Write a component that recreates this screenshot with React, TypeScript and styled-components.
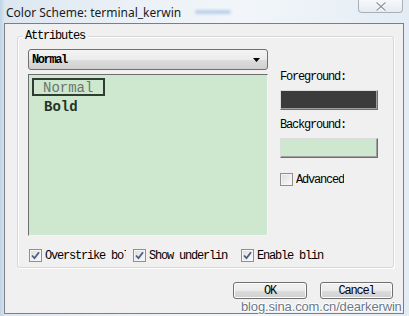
import React from "react";
import styled, { createGlobalStyle } from "styled-components";

const Global = createGlobalStyle`
  html, body { margin: 0; padding: 0; }
  body { width: 409px; height: 316px; overflow: hidden; }
`;

const dlgFont = `
  font-family: "Liberation Mono", "DejaVu Sans Mono", monospace;
  font-size: 12px;
  line-height: 12px;
  letter-spacing: -1.2px;
  color: #000;
`;

const Frame = styled.div`
  position: relative;
  width: 409px;
  height: 316px;
  box-sizing: border-box;
  padding: 0 5px 2px 4px;
  display: flex;
  flex-direction: column;
  background: linear-gradient(90deg, #bfd3e6 0px, #dce7f1 5px, #eaf0f6 30%, #f2f6fa 60%, #e3ecf4 100%);
`;

const TitleBar = styled.div`
  height: 23px;
  display: flex;
  align-items: flex-start;
`;

const Title = styled.span`
  font-family: "Noto Sans", "Open Sans", sans-serif;
  font-size: 12px;
  line-height: 17px;
  color: #1b1b1b;
  margin: 4px 0 0 2px;
  white-space: nowrap;
`;

const Smudge = styled.span`
  width: 36px;
  height: 4px;
  margin: 10px 0 0 14px;
  border-radius: 3px;
  background: #b9cfe8;
  filter: blur(1.5px);
`;

const CloseBtn = styled.div`
  margin-left: auto;
  margin-right: 1px;
  width: 45px;
  height: 13px;
  box-sizing: border-box;
  border: 1px solid #a9b0b8;
  border-top: none;
  border-radius: 0 0 4px 4px;
  background: linear-gradient(#f6f8fb, #e6ebf0);
  display: flex;
  align-items: center;
  justify-content: center;
`;

const Client = styled.div`
  flex: 1;
  border: 1px solid #7b7f84;
  background: #f0f0f0;
  display: flex;
  flex-direction: column;
`;

const Group = styled.div`
  position: relative;
  margin: 12px 0 0 12px;
  width: 377px;
  box-sizing: border-box;
  border: 1px solid #d5d8dc;
  border-radius: 3px;
  box-shadow: inset 1px 1px 0 #fff, 1px 1px 0 #fff;
  padding: 12px 10px 5px 10px;
`;

const Legend = styled.span`
  ${dlgFont}
  position: absolute;
  left: 5px;
  top: -7px;
  padding: 0 3px 0 2px;
  background: #f0f0f0;
`;

const Top = styled.div`
  display: grid;
  grid-template-columns: 240px 98px;
  column-gap: 12px;
`;

const LeftCol = styled.div`
  display: flex;
  flex-direction: column;
  gap: 4px;
`;

const Combo = styled.div`
  height: 21px;
  box-sizing: border-box;
  border: 1px solid #707070;
  border-radius: 3px;
  background: linear-gradient(#f3f3f3 0%, #ebebeb 50%, #dddddd 51%, #cfcfcf 100%);
  display: flex;
  align-items: center;
  padding: 0 7px 0 3px;
`;

const ComboText = styled.span`
  ${dlgFont}
  flex: 1;
  font-weight: bold;
  letter-spacing: -1.4px;
`;

const Sample = styled.div`
  height: 162px;
  box-sizing: border-box;
  background: #cde8cf;
  border: 1px solid;
  border-color: #6e6e6e #f4f4f4 #f4f4f4 #6e6e6e;
  padding: 3px 3px;
  display: flex;
  flex-direction: column;
  align-items: flex-start;
  gap: 1px;
`;

const SampleItem = styled.div<{ $bold?: boolean; $selected?: boolean }>`
  height: 18px;
  box-sizing: border-box;
  border: 2px solid ${(p) => (p.$selected ? "#2e3d30" : "transparent")};
  padding: 1px 10px 0 9px;
  font-family: "Liberation Mono", "DejaVu Sans Mono", monospace;
  font-size: 14px;
  line-height: 14px;
  font-weight: ${(p) => (p.$bold ? "bold" : "normal")};
  color: ${(p) => (p.$bold ? "#243326" : "#6c746d")};
  ${(p) => (p.$bold ? "margin-left: 1px;" : "")}
`;

const RightCol = styled.div`
  display: flex;
  flex-direction: column;
  padding-top: 22px;
`;

const FieldLabel = styled.span`
  ${dlgFont}
  margin-bottom: 7px;
`;

const Swatch = styled.div<{ $color: string }>`
  height: 20px;
  box-sizing: border-box;
  background: ${(p) => p.$color};
  border: 1px solid;
  border-color: #dcdcdc #6d6d6d #6d6d6d #dcdcdc;
  box-shadow: inset -1px -1px 0 #a0a0a0;
  margin-bottom: 9px;
`;

const CheckRow = styled.div`
  display: grid;
  grid-template-columns: 104px 108px auto;
  margin-top: 13px;
  padding-left: 1px;
`;

const CheckItem = styled.label<{ $mt?: number }>`
  display: flex;
  align-items: center;
  gap: 3px;
  height: 13px;
  margin-top: ${(p) => p.$mt ?? 0}px;
`;

const Box = styled.span`
  width: 13px;
  height: 13px;
  flex: none;
  box-sizing: border-box;
  border: 1px solid #8e8f8f;
  background: linear-gradient(135deg, #dcdcdc, #fbfbfb);
  box-shadow: inset 0 0 0 1px #f4f4f4;
  display: flex;
  align-items: center;
  justify-content: center;
`;

const CheckText = styled.span<{ $w?: number }>`
  ${dlgFont}
  white-space: nowrap;
  overflow: hidden;
  ${(p) => (p.$w ? `width: ${p.$w}px;` : "")}
`;

const Buttons = styled.div`
  display: flex;
  justify-content: flex-end;
  gap: 13px;
  margin: 14px 10px 0 0;
`;

const Button = styled.div<{ $w: number }>`
  ${dlgFont}
  width: ${(p) => p.$w}px;
  height: 17px;
  box-sizing: border-box;
  border: 1px solid #707070;
  border-radius: 3px;
  background: linear-gradient(#f2f2f2 0%, #ebebeb 50%, #dddddd 51%, #cfcfcf 100%);
  box-shadow: inset 0 0 0 1px #fbfbfb;
  display: flex;
  align-items: center;
  justify-content: center;
`;

const Watermark = styled.span`
  position: absolute;
  left: 241px;
  top: 299px;
  font-family: "Liberation Sans", Arial, sans-serif;
  font-size: 13px;
  line-height: 15px;
  letter-spacing: -0.15px;
  color: #6d7784;
  text-shadow: 1px 0 0 #fff, -1px 0 0 #fff, 0 1px 0 #fff, 0 -1px 0 #fff;
  white-space: nowrap;
`;

function Check({ checked, label, w, mt }: { checked?: boolean; label: string; w?: number; mt?: number }) {
  return (
    <CheckItem $mt={mt}>
      <Box>
        {checked && (
          <svg width="9" height="9" viewBox="0 0 9 9">
            <path d="M1 4.5 L3.5 7.2 L8 1.2" fill="none" stroke="#4b5d80" strokeWidth="1.8" />
          </svg>
        )}
      </Box>
      <CheckText $w={w}>{label}</CheckText>
    </CheckItem>
  );
}

export default function App() {
  return (
    <Frame>
      <Global />
      <TitleBar>
        <Title>Color Scheme: terminal_kerwin</Title>
        <Smudge />
        <CloseBtn>
          <svg width="12" height="9" viewBox="0 0 12 9">
            <path d="M1.5 0.5 L10.5 8.5 M10.5 0.5 L1.5 8.5" stroke="#ffffff" strokeWidth="3" />
            <path d="M1.5 0.5 L10.5 8.5 M10.5 0.5 L1.5 8.5" stroke="#8d959e" strokeWidth="1.2" />
          </svg>
        </CloseBtn>
      </TitleBar>
      <Client>
        <Group>
          <Legend>Attributes</Legend>
          <Top>
            <LeftCol>
              <Combo>
                <ComboText>Normal</ComboText>
                <svg width="7" height="4" viewBox="0 0 7 4">
                  <path d="M0 0 H7 L3.5 4 Z" fill="#000" />
                </svg>
              </Combo>
              <Sample>
                <SampleItem $selected>Normal</SampleItem>
                <SampleItem $bold>Bold</SampleItem>
              </Sample>
            </LeftCol>
            <RightCol>
              <FieldLabel>Foreground:</FieldLabel>
              <Swatch $color="#3b3b3b" />
              <FieldLabel>Background:</FieldLabel>
              <Swatch $color="#cde8cf" />
              <Check label="Advanced" mt={6} />
            </RightCol>
          </Top>
          <CheckRow>
            <Check checked label="Overstrike bold" w={81} />
            <Check checked label="Show underline" w={79} />
            <Check checked label="Enable blink" w={67} />
          </CheckRow>
        </Group>
        <Buttons>
          <Button $w={74}>OK</Button>
          <Button $w={73}>Cancel</Button>
        </Buttons>
      </Client>
      <Watermark>blog.sina.com.cn/dearkerwin</Watermark>
    </Frame>
  );
}
